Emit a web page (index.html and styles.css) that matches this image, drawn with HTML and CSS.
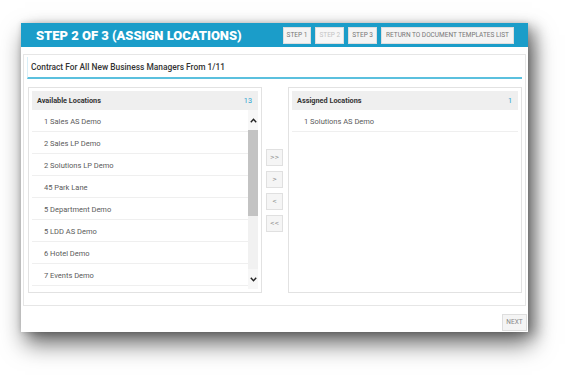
FILE: index.html
```html
<!DOCTYPE html>
<html lang="en">
<head>
<meta charset="utf-8">
<title>Step 2 of 3 (Assign Locations)</title>
<link rel="stylesheet" href="styles.css">
</head>
<body>
<div class="page">
  <div class="window">
    <header class="topbar">
      <h1 class="title">STEP 2 OF 3 (ASSIGN LOCATIONS)</h1>
      <nav class="steps">
        <button class="btn step">STEP 1</button>
        <button class="btn step disabled">STEP 2</button>
        <button class="btn step">STEP 3</button>
        <button class="btn">RETURN TO DOCUMENT TEMPLATES LIST</button>
      </nav>
    </header>
    <main class="content">
      <section class="box">
        <div class="box-title">Contract For All New Business Managers From 1/11</div>
        <div class="lists">
          <div class="panel">
            <div class="panel-head"><span>Available Locations</span><span class="count">13</span></div>
            <div class="panel-body">
              <ul class="items">
                <li>1 Sales AS Demo</li>
                <li>2 Sales LP Demo</li>
                <li>2 Solutions LP Demo</li>
                <li>45 Park Lane</li>
                <li>5 Department Demo</li>
                <li>5 LDD AS Demo</li>
                <li>6 Hotel Demo</li>
                <li>7 Events Demo</li>
              </ul>
              <div class="scrollbar">
                <div class="sb-btn">
                  <svg width="7" height="5" viewBox="0 0 7 5"><polyline points="0.8,4.2 3.5,1.2 6.2,4.2" fill="none" stroke="#222" stroke-width="1.4"/></svg>
                </div>
                <div class="sb-thumb"></div>
                <div class="sb-track"></div>
                <div class="sb-btn">
                  <svg width="7" height="5" viewBox="0 0 7 5"><polyline points="0.8,0.8 3.5,3.8 6.2,0.8" fill="none" stroke="#222" stroke-width="1.4"/></svg>
                </div>
              </div>
            </div>
          </div>
          <div class="moves">
            <button class="mv">&gt;&gt;</button>
            <button class="mv">&gt;</button>
            <button class="mv">&lt;</button>
            <button class="mv">&lt;&lt;</button>
          </div>
          <div class="panel">
            <div class="panel-head"><span>Assigned Locations</span><span class="count">1</span></div>
            <div class="panel-body">
              <ul class="items">
                <li>1 Solutions AS Demo</li>
              </ul>
            </div>
          </div>
        </div>
      </section>
    </main>
    <footer class="footer">
      <button class="btn next">NEXT</button>
    </footer>
  </div>
</div>
</body>
</html>
```

FILE: styles.css
```css
* { box-sizing: border-box; }

html, body {
  margin: 0;
  background: #ffffff;
}

body {
  font-family: Roboto, "Liberation Sans", Arial, sans-serif;
  color: #444;
}

.page {
  min-height: 375px;
  padding: 23px 0 0 21px;
}

.window {
  width: 507px;
  height: 309px;
  background: #fff;
  box-shadow: 0 0 5px rgba(0, 0, 0, 0.15), 4px 12px 22px rgba(0, 0, 0, 0.55), 8px 4px 12px rgba(0, 0, 0, 0.25);
  display: flex;
  flex-direction: column;
}

.topbar {
  height: 24px;
  background: #1b9dc9;
  display: flex;
  align-items: center;
  justify-content: space-between;
  padding: 0 14px 0 15px;
}

.title {
  margin: 0;
  color: #fff;
  font-size: 13px;
  font-weight: 900;
  line-height: 1;
  letter-spacing: -0.02px;
}

.steps {
  display: flex;
  gap: 4px;
}

.btn {
  height: 17px;
  padding: 0 4px;
  border: 1px solid #dedede;
  background: #f4f4f4;
  color: #777;
  font-family: Roboto, "Liberation Sans", Arial, sans-serif;
  font-size: 6.5px;
  line-height: 15px;
  white-space: nowrap;
}

.btn.step {
  padding: 0 3px;
}

.btn.disabled {
  color: #c4c4c4;
  background: #f7f7f7;
}

.content {
  padding: 7px 2px 0 2px;
}

.box {
  border: 1px solid #e6e6e6;
  padding: 2px 3px 12px 3px;
}

.box-title {
  height: 22px;
  border-left: 1px solid #d9eef7;
  border-bottom: 2px solid #5bc0de;
  padding-left: 3px;
  font-size: 8.4px;
  font-weight: 500;
  color: #333;
  line-height: 21px;
}

.lists {
  margin-top: 8px;
  padding-left: 1px;
  display: flex;
}

.panel {
  width: 234px;
  height: 206px;
  border: 1px solid #e2e2e2;
  padding: 3px;
  display: flex;
  flex-direction: column;
}

.panel-head {
  height: 19px;
  background: #efefef;
  display: flex;
  align-items: center;
  justify-content: space-between;
  padding: 0 6px 0 5px;
  font-size: 7.3px;
  font-weight: 700;
  color: #333;
}

.count {
  color: #2ba3cf;
  font-weight: 400;
}

.panel-body {
  flex: 1;
  display: flex;
  overflow: hidden;
}

.items {
  flex: 1;
  list-style: none;
  margin: 0;
  padding: 0;
}

.items li {
  height: 22px;
  padding-top: 2px;
  line-height: 19px;
  padding-left: 12px;
  border-bottom: 1px solid #efefef;
  font-size: 7.5px;
  color: #5a5a5a;
}

.scrollbar {
  width: 10px;
  background: #f1f1f1;
  display: flex;
  flex-direction: column;
}

.sb-btn {
  height: 20px;
  display: flex;
  align-items: center;
  justify-content: center;
  background: #f7f7f7;
}

.sb-thumb {
  height: 86px;
  background: #c3c3c3;
}

.sb-track {
  flex: 1;
}

.moves {
  width: 26px;
  display: flex;
  flex-direction: column;
  align-items: flex-start;
  padding: 62px 0 0 4px;
  gap: 5px;
}

.mv {
  width: 17px;
  height: 17px;
  padding: 0;
  border: 1px solid #e0e0e0;
  background: #f5f5f5;
  color: #888;
  font-family: "DejaVu Sans", Arial, sans-serif;
  font-size: 5.5px;
  line-height: 15px;
}

.footer {
  flex: 1;
  display: flex;
  justify-content: flex-end;
  align-items: flex-start;
  padding: 8px 1px 0 0;
}

.btn.next {
  width: 25px;
  padding: 0;
  color: #888;
}
```
